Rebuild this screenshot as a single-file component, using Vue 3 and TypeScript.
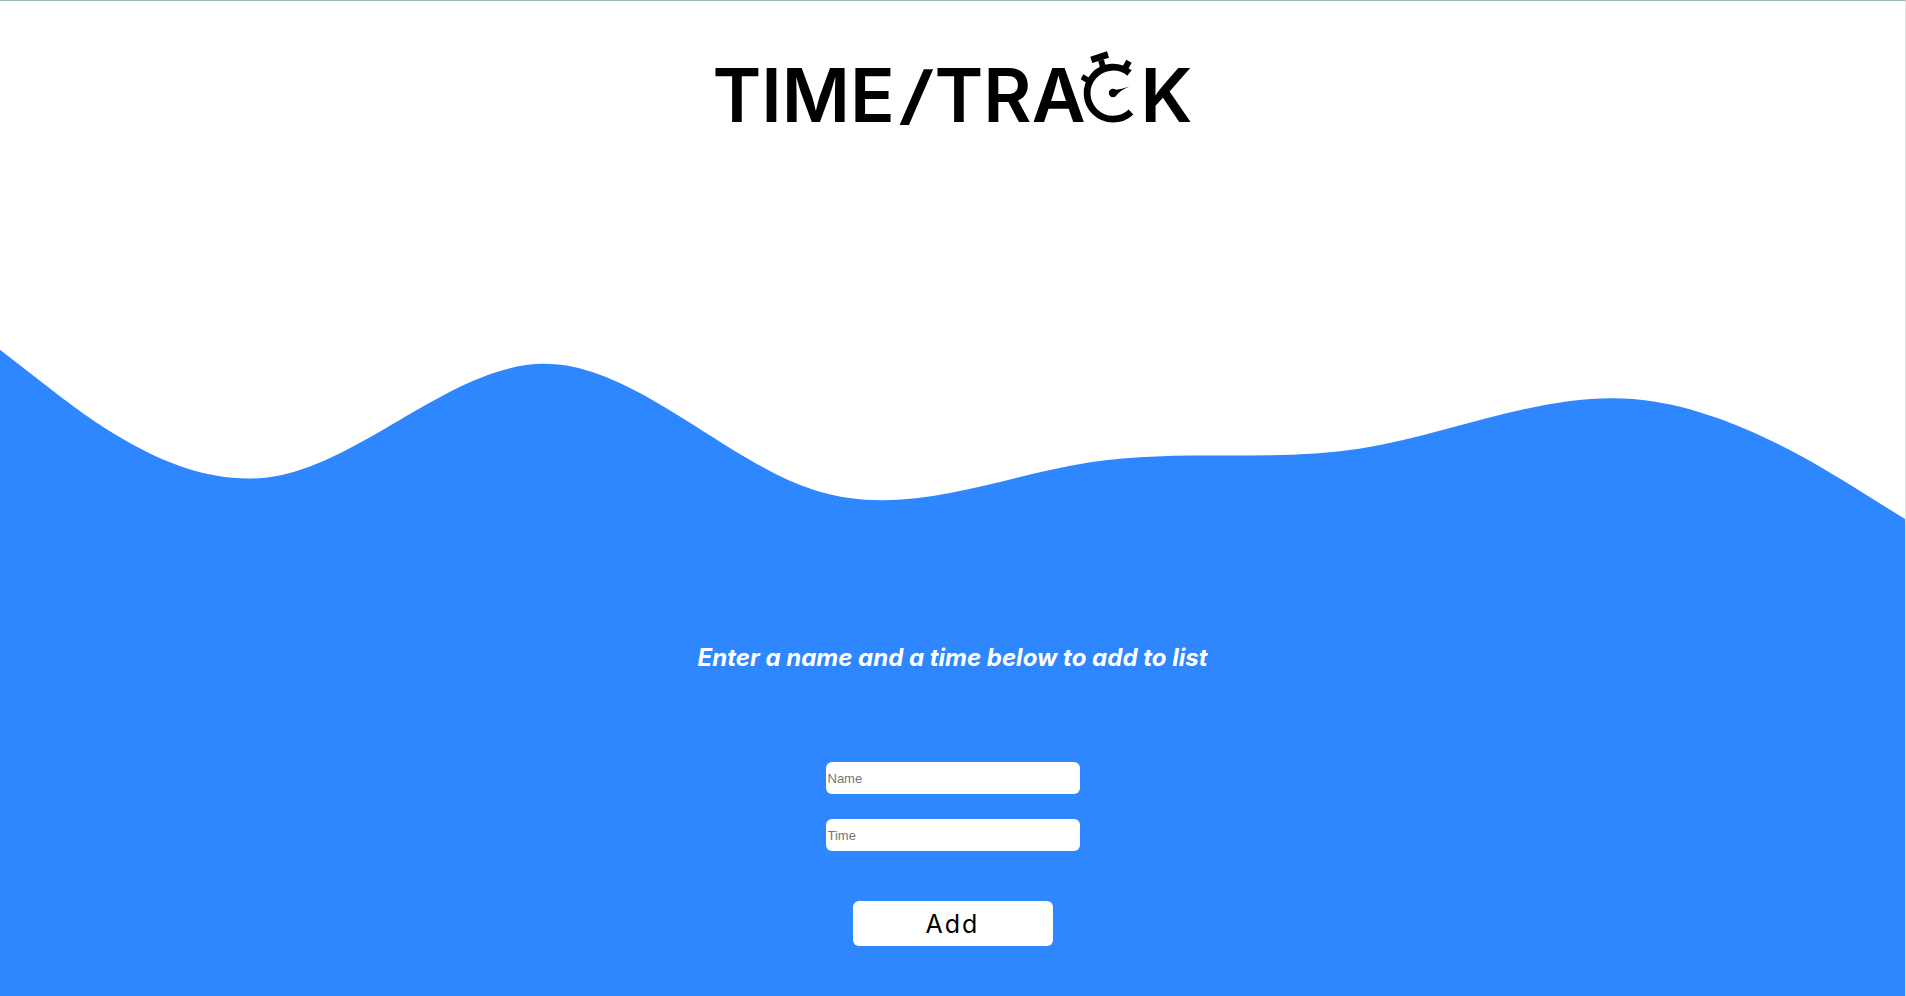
<script setup lang="ts">
import { ref } from 'vue'

interface Entry {
  name: string
  time: string
}

const name = ref('')
const time = ref('')
const entries = ref<Entry[]>([])

function addEntry(): void {
  if (!name.value || !time.value) return
  entries.value.push({ name: name.value, time: time.value })
  name.value = ''
  time.value = ''
}
</script>

<template>
  <div class="page">
    <header class="header">
      <h1 class="logo">
        <span>TIME</span>
        <span class="slash">/</span>
        <span>TRA</span>
        <svg class="watch" viewBox="0 0 54 73" width="54" height="73" aria-hidden="true">
          <path d="M49.5 23A26 26 0 1 0 51 62" fill="none" stroke="#000" stroke-width="6.8" />
          <path d="M10.3 6.7 27 1.3 29 7.7 12.3 13Z" />
          <path d="M18.3 11 24 9.4 26 18 20.5 19.5Z" />
          <path d="M46.3 9.7 51.7 12.7 47.6 20 42.3 17Z" />
          <path d="M3.3 24.3 10 28.3 7 33 0.7 29.3Z" />
          <circle cx="33" cy="43" r="4.2" />
          <path d="M34 39Q37 41 49.2 36.6 38.5 41.5 36.5 45.5Z" />
        </svg>
        <span>K</span>
      </h1>
    </header>
    <svg class="wave" viewBox="0 0 1440 320" aria-hidden="true">
      <path
        d="M0,160L34.3,186.7C68.6,213.3,137.1,266.7,205.7,256C274.3,245.3,342.9,170.7,411.4,170.7C480,170.7,548.6,245.3,617.1,266.7C685.7,288,754.3,256,822.9,245.3C891.4,234.7,960,245.3,1028.6,234.7C1097.1,224,1165.7,192,1234.3,197.3C1302.9,202.7,1371.4,245.3,1405.7,266.7L1440,288L1440,320L0,320Z"
      />
    </svg>
    <main class="panel">
      <h2 class="prompt">Enter a name and a time below to add to list</h2>
      <form class="form" @submit.prevent="addEntry">
        <input v-model="name" class="field" type="text" placeholder="Name" aria-label="Name" />
        <input v-model="time" class="field" type="text" placeholder="Time" aria-label="Time" />
        <button class="add" type="submit">Add</button>
      </form>
      <ul v-if="entries.length" class="list">
        <li v-for="(entry, i) in entries" :key="i">{{ entry.name }} – {{ entry.time }}</li>
      </ul>
    </main>
  </div>
</template>

<style>
body {
  margin: 0;
  background: #2e87ff;
}
</style>

<style scoped>
.page {
  box-sizing: border-box;
  display: flex;
  flex-direction: column;
  min-height: 100vh;
  border-top: 1px solid #9fb5a6;
  border-right: 1px solid #e0e0e0;
  background: #fff;
  font-family: Inter, "Liberation Sans", sans-serif;
}

.header {
  display: flex;
  justify-content: center;
  box-sizing: border-box;
  height: 137px;
  padding-top: 49px;
}

.logo {
  display: flex;
  margin: 0;
  color: #000;
  font-size: 74px;
  font-weight: 600;
  line-height: 90px;
}

.slash {
  padding: 0 6px 0 8px;
  font-size: 64px;
  font-style: italic;
  font-weight: 800;
}

.watch {
  flex: none;
  margin-left: -5px;
  margin-right: 6px;
}

.wave {
  display: block;
  width: 100%;
  fill: #2e87ff;
}

.panel {
  flex: 1;
  display: flex;
  flex-direction: column;
  align-items: center;
  padding: 81px 16px 48px;
  background: #2e87ff;
}

.prompt {
  margin: 0;
  color: #fff;
  font-size: 24px;
  font-style: oblique 20deg;
  font-weight: 700;
  line-height: 32px;
  text-align: center;
}

.form {
  display: flex;
  flex-direction: column;
  align-items: center;
  gap: 25px;
  margin-top: 88px;
}

.field {
  box-sizing: border-box;
  width: 254px;
  height: 32px;
  padding: 1px 2px;
  border: 0;
  border-radius: 6px;
  background: #fff;
  font-family: "Liberation Sans", Arial, sans-serif;
  font-size: 13px;
}

.field::placeholder {
  color: #757575;
}

.add {
  width: 200px;
  height: 45px;
  margin-top: 25px;
  padding: 0;
  border: 0;
  border-radius: 6px;
  background: #fff;
  color: #000;
  font-family: inherit;
  font-size: 25px;
  letter-spacing: 2px;
  cursor: pointer;
}

.list {
  margin: 32px 0 0;
  padding: 0;
  color: #fff;
  font-size: 18px;
  list-style: none;
}
</style>
